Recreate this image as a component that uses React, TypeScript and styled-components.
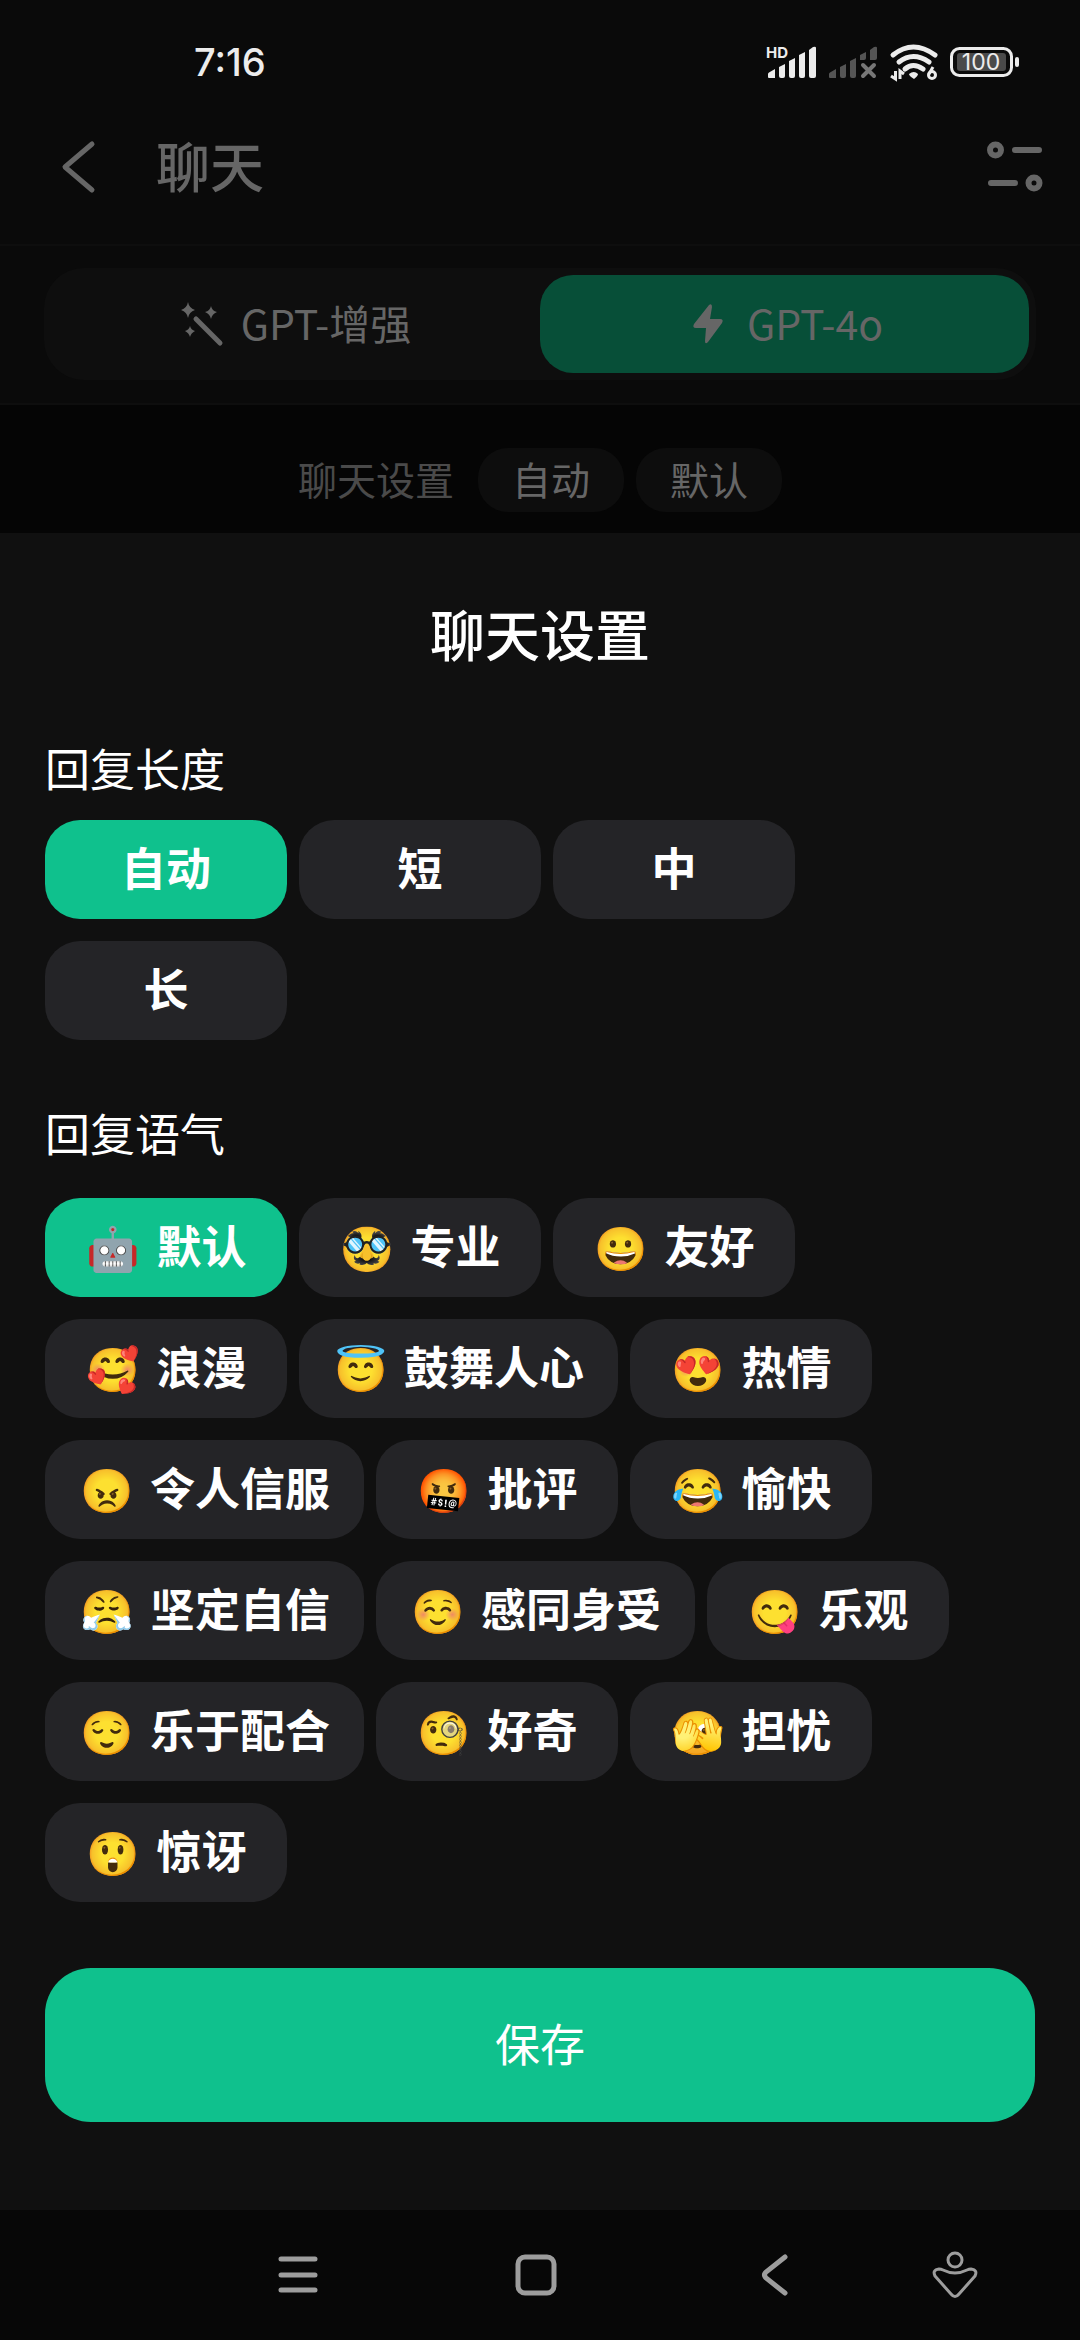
import React, { useState } from "react";
import styled, { createGlobalStyle } from "styled-components";

const GlobalStyle = createGlobalStyle`
  *, *::before, *::after { box-sizing: border-box; }
  html, body { margin: 0; background: #070707; }
  body { font-family: "Liberation Sans", "Noto Sans CJK SC", sans-serif; }
  button { font: inherit; color: inherit; border: 0; background: none; padding: 0; margin: 0; cursor: pointer; }
  svg { display: block; flex: none; overflow: visible; }
`;

const CJK = `"Noto Sans CJK SC", sans-serif`;

const Screen = styled.main`
  min-height: 100vh;
  display: flex;
  flex-direction: column;
  font-family: ${CJK};
  background: #050505;
`;

const StatusBar = styled.div`
  display: flex;
  align-items: center;
  justify-content: space-between;
  height: 124px;
  padding: 0 60px 0 194px;
  background: #0a0a0a;
`;

const Clock = styled.time`
  font: 500 38px/48px Inter, sans-serif;
  color: #ececec;
`;

const StatusIcons = styled.div`
  display: flex;
  align-items: center;
  gap: 12px;
`;

const Header = styled.header`
  display: flex;
  align-items: center;
  height: 122px;
  padding: 0 37px 34px 56px;
  background: #0a0a0a;
  color: #666;
  border-bottom: 2px solid #0e0e0e;
`;

const HeaderTitle = styled.h1`
  flex: 1;
  margin: 0 0 0 56px;
  padding-bottom: 4px;
  font-size: 54px;
  line-height: 72px;
  font-weight: 500;
`;

const ModelBar = styled.section`
  padding: 22px 44px 23px;
  background: #0a0a0a;
  border-bottom: 2px solid #0e0e0e;
`;

const Segmented = styled.div`
  display: grid;
  grid-template-columns: 1fr 1fr;
  padding: 7px;
  border-radius: 40px;
  background: #0e0e0e;
`;

const Segment = styled.button<{ $on?: boolean }>`
  display: flex;
  align-items: center;
  justify-content: center;
  gap: 17px;
  height: 98px;
  border-radius: 33px;
  font-size: 41px;
  line-height: 48px;
  color: #666;
  background: ${(p) => (p.$on ? "#074f38" : "transparent")};
`;

const SegmentText = styled.span`
  padding-bottom: 4px;
`;

const Summary = styled.div`
  display: flex;
  align-items: center;
  justify-content: center;
  gap: 12px;
  height: 128px;
  padding-top: 22px;
  font-size: 39px;
  line-height: 48px;
`;

const SummaryLabel = styled.span`
  margin-right: 12px;
  padding-bottom: 4px;
  color: #4a4a4a;
`;

const SummaryChip = styled.button`
  width: 146px;
  height: 64px;
  padding-bottom: 4px;
  border-radius: 30px;
  background: #0d0d0d;
  color: #666;
`;

const Sheet = styled.section`
  flex: 1;
  display: flex;
  flex-direction: column;
  padding: 61px 45px 88px;
  background: #101010;
  color: #fff;
`;

const SheetTitle = styled.h2`
  margin: 0 0 66px;
  text-align: center;
  font-size: 55px;
  line-height: 76px;
  font-weight: 500;
`;

const GroupTitle = styled.h3<{ $gap: number }>`
  margin: 0 0 ${(p) => p.$gap}px;
  font-size: 45px;
  line-height: 64px;
  font-weight: 400;
`;

const Options = styled.div<{ $after: number }>`
  display: flex;
  flex-wrap: wrap;
  gap: 22px 12px;
  margin-bottom: ${(p) => p.$after}px;
`;

const Option = styled.button<{ $on: boolean }>`
  display: flex;
  align-items: center;
  justify-content: center;
  gap: 16px;
  min-width: 242px;
  height: 99px;
  padding: 0 34px 5px;
  border-radius: 35px;
  font-size: 45px;
  line-height: 64px;
  font-weight: 700;
  background: ${(p) => (p.$on ? "#0fc18d" : "#242427")};
`;

const Emoji = styled.span`
  width: 55px;
  font-size: 43px;
  text-align: center;
`;

const Save = styled.button`
  height: 154px;
  padding-bottom: 5px;
  border-radius: 46px;
  font-size: 45px;
  line-height: 64px;
  background: #0fc18d;
`;

const NavBar = styled.nav`
  display: grid;
  grid-template-columns: 179fr 238fr 238fr 238fr 124fr 63fr;
  height: 130px;
  background: #070707;
  color: #9d9d9d;
`;

const NavButton = styled.button<{ $first?: boolean }>`
  display: flex;
  align-items: center;
  justify-content: center;
  grid-column: ${(p) => (p.$first ? "2" : "auto")};
`;

const lengths = ["自动", "短", "中", "长"];

const tones: [string, string][] = [
  ["🤖", "默认"],
  ["🥸", "专业"],
  ["😀", "友好"],
  ["🥰", "浪漫"],
  ["😇", "鼓舞人心"],
  ["😍", "热情"],
  ["😠", "令人信服"],
  ["🤬", "批评"],
  ["😂", "愉快"],
  ["😤", "坚定自信"],
  ["☺️", "感同身受"],
  ["😋", "乐观"],
  ["😌", "乐于配合"],
  ["🧐", "好奇"],
  ["🫣", "担忧"],
  ["😲", "惊讶"],
];

const SignalHD = () => (
  <svg width="51" height="34" viewBox="0 0 51 34" fill="#ececec" aria-hidden="true">
    <text x="0" y="13" fontFamily="Inter, sans-serif" fontSize="15" fontWeight="700">HD</text>
    <path d="M2 32v-3q0-1 1-1.500l6-3.500v9H3q-1 0-1-1z" />
    <path d="M13 22l6-3v12q0 2-2 2h-2q-2 0-2-2z" />
    <path d="M23 16l6-3v18q0 2-2 2h-2q-2 0-2-2z" />
    <path d="M33 10l6-3v24q0 2-2 2h-2q-2 0-2-2z" />
    <path d="M43 5l4-3q3-1 3 1v28q0 2-2 2h-3q-2 0-2-2z" />
  </svg>
);

const SignalOff = () => (
  <svg width="49" height="34" viewBox="0 0 49 34" fill="#555" aria-hidden="true">
    <path d="M0 32v-3q0-1 1-1.500l6-3.500v9H1q-1 0-1-1z" />
    <path d="M11 22l6-3v12q0 2-2 2h-2q-2 0-2-2z" />
    <path d="M21 16l6-3v18q0 2-2 2h-2q-2 0-2-2z" />
    <path d="M31 10l6-3v6q0 2-2 2h-4z" />
    <path d="M41 5l4-3q3-1 3 1v10q0 2-2 2h-5z" />
    <path d="M34 20l11 11M45 20L34 31" stroke="#777" strokeWidth="4" strokeLinecap="round" />
  </svg>
);

const Wifi = () => (
  <svg width="48" height="38" viewBox="0 0 48 38" fill="none" stroke="#ececec" aria-hidden="true">
    <path d="M3 12q20-16 42 0" strokeWidth="5" strokeLinecap="round" />
    <path d="M9 19q14-11 30 0" strokeWidth="5" strokeLinecap="round" />
    <path d="M15 26q8-7 18 0" strokeWidth="5" strokeLinecap="round" />
    <path d="M19 31q5-4 9 0q0 2-4 5q-5-3-5-5z" fill="#ececec" stroke="none" />
    <path d="M5.500 28v8L1 33M10 36v-8l4 3" strokeWidth="3" />
    <circle cx="42" cy="32" r="3.500" strokeWidth="3" />
    <path d="M39 31l4-7" strokeWidth="3" />
  </svg>
);

const Battery = () => (
  <svg width="70" height="32" viewBox="0 0 70 32" aria-hidden="true">
    <rect x="1.500" y="2.500" width="60" height="27" rx="8" fill="none" stroke="#ececec" strokeWidth="3" />
    <rect x="7" y="7" width="49" height="18" rx="3" fill="#4a4a4a" />
    <rect x="65" y="11" width="4" height="10" rx="2" fill="#ececec" />
    <text x="31" y="24" textAnchor="middle" fontFamily="Inter, sans-serif" fontSize="23" fill="#ececec">100</text>
  </svg>
);

const Wand = () => (
  <svg width="44" height="44" viewBox="0 0 44 44" fill="#666" aria-hidden="true">
    <path d="M16 17L40 41" stroke="#666" strokeWidth="5" strokeLinecap="round" />
    <path d="M8 0q1 6 7 8q-6 2-7 8q-1-6-7-8q6-2 7-8z" />
    <path d="M31 4q1 5 6 6q-5 2-6 7q-1-5-6-7q5-1 6-6z" />
    <path d="M10 24q1 4 5 5q-4 2-5 6q-1-4-5-6q4-1 5-5z" />
  </svg>
);

const Bolt = () => (
  <svg width="44" height="44" viewBox="0 0 44 44" fill="#666" aria-hidden="true">
    <path d="M23 3q3-2 3 2l-2 12h10q4 0 2 4L22 40q-3 3-3-1l1-13H10q-4 0-2-4z" />
  </svg>
);

export default function App() {
  const [length, setLength] = useState("自动");
  const [tone, setTone] = useState("默认");
  return (
    <Screen>
      <GlobalStyle />
      <StatusBar>
        <Clock>7:16</Clock>
        <StatusIcons>
          <SignalHD />
          <SignalOff />
          <Wifi />
          <Battery />
        </StatusIcons>
      </StatusBar>
      <Header>
        <button aria-label="返回">
          <svg width="44" height="52" viewBox="0 0 44 52" fill="none" stroke="#666" strokeWidth="5" strokeLinecap="round" strokeLinejoin="round">
            <path d="M36 3L9 26L36 49" />
          </svg>
        </button>
        <HeaderTitle>聊天</HeaderTitle>
        <button aria-label="设置">
          <svg width="56" height="52" viewBox="0 0 56 52" fill="none" stroke="#666" strokeWidth="6" strokeLinecap="round">
            <circle cx="8.500" cy="9" r="5.500" />
            <path d="M28 9H52M4 42H28" />
            <circle cx="47" cy="42" r="5.500" />
          </svg>
        </button>
      </Header>
      <ModelBar>
        <Segmented>
          <Segment>
            <Wand />
            <SegmentText>GPT-增强</SegmentText>
          </Segment>
          <Segment $on>
            <Bolt />
            <SegmentText>GPT-4o</SegmentText>
          </Segment>
        </Segmented>
      </ModelBar>
      <Summary>
        <SummaryLabel>聊天设置</SummaryLabel>
        <SummaryChip>{length}</SummaryChip>
        <SummaryChip>{tone}</SummaryChip>
      </Summary>
      <Sheet>
        <SheetTitle>聊天设置</SheetTitle>
        <GroupTitle $gap={20}>回复长度</GroupTitle>
        <Options $after={61}>
          {lengths.map((name) => (
            <Option key={name} $on={name === length} aria-pressed={name === length} onClick={() => setLength(name)}>
              {name}
            </Option>
          ))}
        </Options>
        <GroupTitle $gap={33}>回复语气</GroupTitle>
        <Options $after={66}>
          {tones.map(([emoji, name]) => (
            <Option key={name} $on={name === tone} aria-pressed={name === tone} onClick={() => setTone(name)}>
              <Emoji>{emoji}</Emoji>
              {name}
            </Option>
          ))}
        </Options>
        <Save>保存</Save>
      </Sheet>
      <NavBar>
        <NavButton $first aria-label="菜单">
          <svg width="44" height="44" viewBox="0 0 44 44" stroke="#9d9d9d" strokeWidth="5" strokeLinecap="round">
            <path d="M5 6H39M5 22H39M5 37H39" />
          </svg>
        </NavButton>
        <NavButton aria-label="主页">
          <svg width="44" height="44" viewBox="0 0 44 44" fill="none" stroke="#9d9d9d" strokeWidth="5">
            <rect x="4" y="4" width="36" height="36" rx="7" />
          </svg>
        </NavButton>
        <NavButton aria-label="后退">
          <svg width="44" height="44" viewBox="0 0 44 44" fill="none" stroke="#9d9d9d" strokeWidth="5" strokeLinecap="round">
            <path d="M33 4L14 19q-3 3 0 6L33 40" />
          </svg>
        </NavButton>
        <NavButton aria-label="无障碍">
          <svg width="48" height="48" viewBox="0 0 48 48" fill="none" stroke="#9d9d9d" strokeWidth="3" strokeLinejoin="round">
            <circle cx="24" cy="9" r="7" />
            <path d="M8 18q2 0 4 1q12 6 24 0q2-1 4-1q7 1 4 7L28 43q-4 5-8 0L4 25q-3-6 4-7z" />
          </svg>
        </NavButton>
      </NavBar>
    </Screen>
  );
}
